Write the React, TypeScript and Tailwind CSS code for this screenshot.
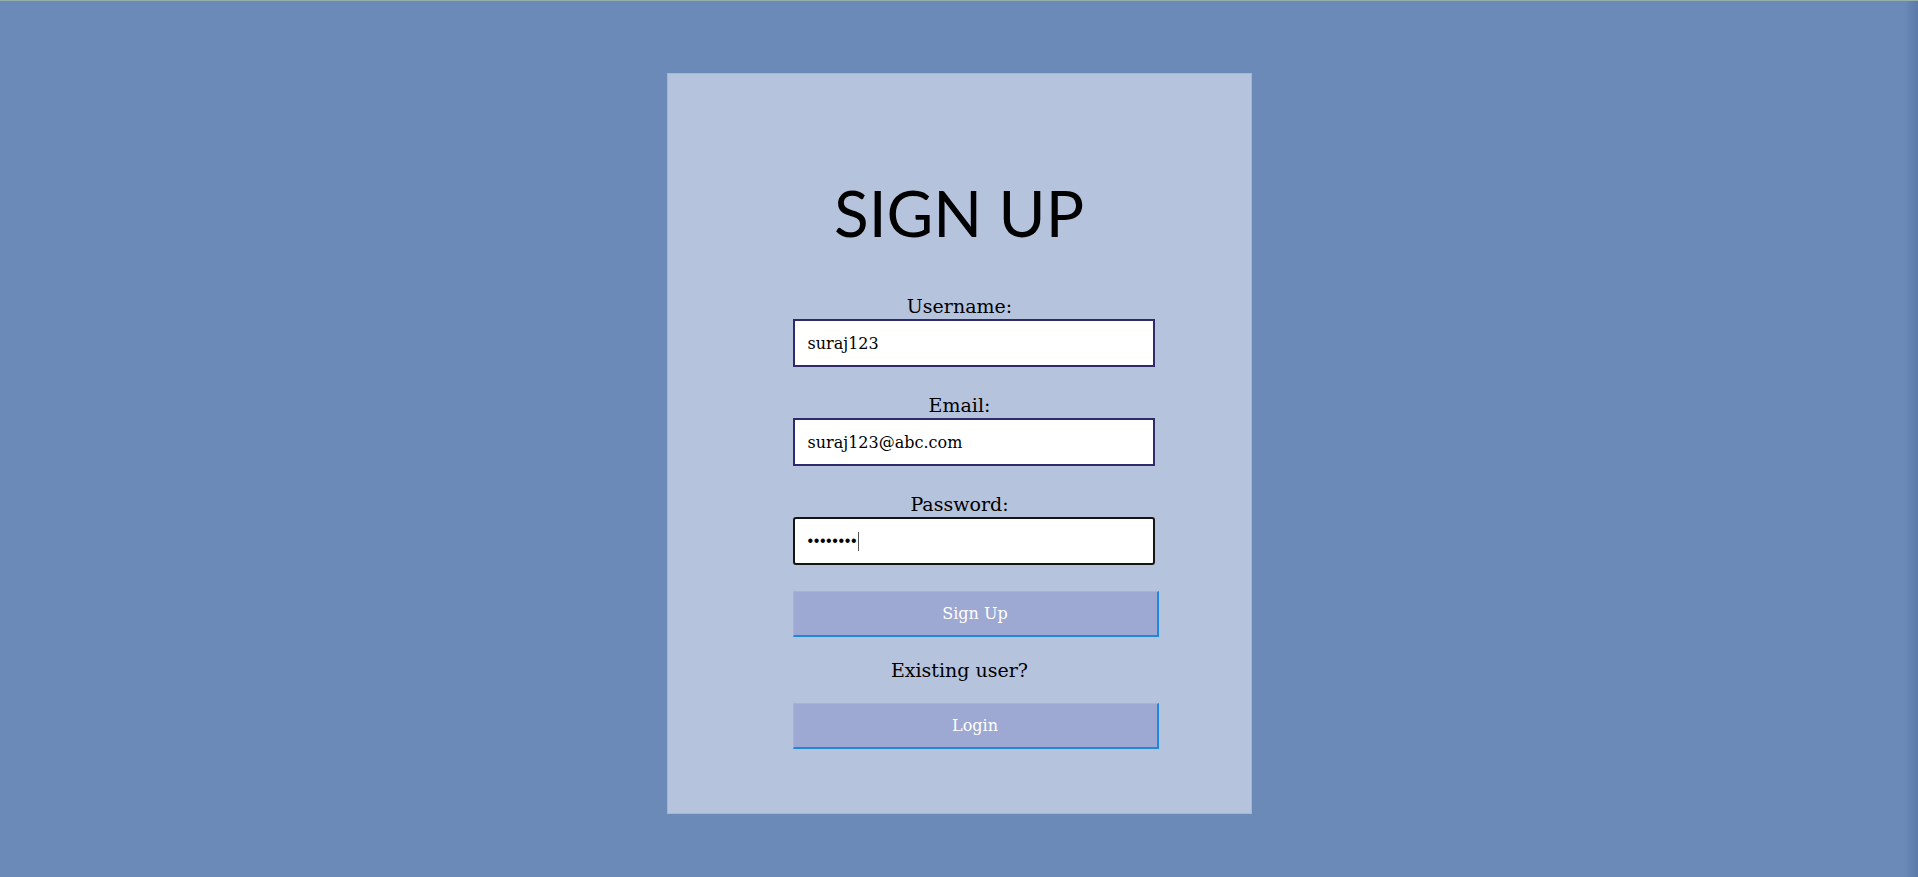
import React from "react";

const serif = { fontFamily: '"DejaVu Serif", "Liberation Serif", serif' };

function Field({ label, value }: { label: string; value: string }) {
  return (
    <div className="flex flex-col">
      <label
        className="block w-[334px] text-center text-[19px] leading-[25px] text-black"
        style={serif}
      >
        {label}
      </label>
      <input
        readOnly
        value={value}
        className="box-border h-[48px] w-[362px] border-2 border-[#2f2a6c] bg-white pl-[13px] text-[16px] text-black outline-none"
        style={serif}
      />
    </div>
  );
}

function Btn({ children }: { children: React.ReactNode }) {
  return (
    <button
      className="box-border h-[46px] w-[366px] border-t border-l border-r-2 border-b-2 border-t-[#a9b3d9] border-l-[#a9b3d9] border-r-[#1f87dc] border-b-[#1f87dc] bg-[#9da8d3] text-[16px] text-white"
      style={serif}
    >
      {children}
    </button>
  );
}

export default function App() {
  return (
    <div className="relative h-[877px] w-full overflow-hidden border-t border-t-[#93b1aa] bg-[#6b8ab8]">
      <div className="pointer-events-none absolute right-0 top-0 h-full w-[14px] bg-[linear-gradient(to_right,rgba(90,120,170,0),rgba(80,110,160,0.6))]" />
      <div className="mx-auto mt-[73px] flex h-[739px] w-[583px] flex-col bg-[#b5c3dd] shadow-[0_0_0_1px_#a6b5d4]">
        <h1
          className="mt-[107px] text-center text-[64px] font-normal leading-[64px] text-black"
          style={{ fontFamily: 'Lato, "Noto Sans", sans-serif' }}
        >
          SIGN UP
        </h1>
        <div className="ml-[125px] mt-[49px] flex w-[366px] flex-col">
          <Field label="Username:" value="suraj123" />
          <div className="h-[26px]" />
          <Field label="Email:" value="suraj123@abc.com" />
          <div className="h-[26px]" />
          <div className="flex flex-col">
            <label
              className="block w-[334px] text-center text-[19px] leading-[25px] text-black"
              style={serif}
            >
              Password:
            </label>
            <div className="box-border flex h-[48px] w-[362px] items-center rounded-[3px] border-2 border-[#151515] bg-white pl-[13px]">
              <span
                className="text-[16px] tracking-[0.6px] text-black"
                style={{ fontFamily: '"Liberation Sans", Arial, sans-serif' }}
              >
                ••••••••
              </span>
              <span className="ml-[1px] h-[19px] w-[1px] bg-[#555]" />
            </div>
          </div>
          <div className="h-[26px]" />
          <Btn>Sign Up</Btn>
          <p
            className="mt-[21px] mb-[21px] w-[334px] text-center text-[19px] leading-[24px] text-black"
            style={serif}
          >
            Existing user?
          </p>
          <Btn>Login</Btn>
        </div>
      </div>
    </div>
  );
}
